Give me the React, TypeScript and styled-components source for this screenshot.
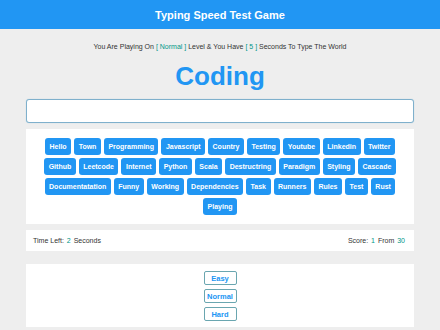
import React from 'react'
import styled, { createGlobalStyle } from 'styled-components'

const WORDS = [
  'Hello', 'Town', 'Programming', 'Javascript', 'Country', 'Testing', 'Youtube', 'Linkedin', 'Twitter',
  'Github', 'Leetcode', 'Internet', 'Python', 'Scala', 'Destructring', 'Paradigm', 'Styling', 'Cascade',
  'Documentatation', 'Funny', 'Working', 'Dependencies', 'Task', 'Runners', 'Rules', 'Test', 'Rust',
  'Playing'
]

const LEVELS = ['Easy', 'Normal', 'Hard']

const GlobalStyle = createGlobalStyle`
  html, body {
    margin: 0;
    padding: 0;
    background: #eeeeee;
    font-family: "Liberation Sans", Arial, sans-serif;
  }
`

const App: React.FC = () => {
  return (
    <>
      <GlobalStyle />
      <Header>Typing Speed Test Game</Header>
      <Main>
        <Message>
          You Are Playing On <Accent>[ Normal ]</Accent> Level &amp; You Have{' '}
          <Accent>[ 5 ]</Accent> Seconds To Type The World
        </Message>
        <Word>Coding</Word>
        <Input type='text' autoFocus />
        <WordsBox>
          {WORDS.map((w) => (
            <WordTag key={w}>{w}</WordTag>
          ))}
        </WordsBox>
        <Stats>
          <span>
            Time Left: <Num>2</Num> Seconds
          </span>
          <span>
            Score: <Num>1</Num> From <Num>30</Num>
          </span>
        </Stats>
        <LevelsBox>
          {LEVELS.map((l) => (
            <LevelButton key={l}>{l}</LevelButton>
          ))}
        </LevelsBox>
      </Main>
    </>
  )
}

export default App

const Header = styled.div`
  height: 29px;
  background: #2196f3;
  color: #fff;
  font-weight: 700;
  font-size: 11px;
  display: flex;
  align-items: center;
  justify-content: center;
`

const Main = styled.div`
  width: 388px;
  margin: 0 auto;
  display: flex;
  flex-direction: column;
`

const Message = styled.div`
  margin-top: 13px;
  text-align: center;
  font-size: 7px;
  color: #333;
  line-height: 10px;
`

const Accent = styled.span`
  color: #009688;
`

const Num = styled.span`
  color: #009688;
  margin: 0 1px;
`

const Word = styled.div`
  margin-top: 9px;
  text-align: center;
  color: #2196f3;
  font-weight: 700;
  font-size: 26px;
  line-height: 30px;
`

const Input = styled.input`
  margin-top: 8px;
  box-sizing: border-box;
  width: 100%;
  height: 24px;
  border: 1px solid #7fb0cc;
  border-radius: 3px;
  box-shadow: 0 0 1px #9fc6da;
  outline: none;
  text-align: center;
  background: #fff;
  caret-color: #777;
`

const WordsBox = styled.div`
  margin-top: 6px;
  background: #fff;
  padding: 9px 18px;
  display: flex;
  flex-wrap: wrap;
  justify-content: center;
  gap: 3px;
`

const WordTag = styled.span`
  background: #2196f3;
  color: #fff;
  font-weight: 700;
  font-size: 7px;
  height: 17px;
  padding: 0 4.5px;
  border-radius: 3px;
  display: flex;
  align-items: center;
`

const Stats = styled.div`
  margin-top: 6px;
  background: #fff;
  height: 21px;
  padding: 0 8px 0 7px;
  display: flex;
  align-items: center;
  justify-content: space-between;
  font-size: 7px;
  color: #333;
`

const LevelsBox = styled.div`
  margin-top: 13px;
  background: #fff;
  padding: 7px 0 6px;
  display: flex;
  flex-direction: column;
  align-items: center;
  gap: 4px;
`

const LevelButton = styled.span`
  box-sizing: border-box;
  width: 33px;
  height: 14px;
  border: 1px solid #6aa6b0;
  border-radius: 2px;
  color: #2196f3;
  font-weight: 700;
  font-size: 7.5px;
  display: flex;
  align-items: center;
  justify-content: center;
`
